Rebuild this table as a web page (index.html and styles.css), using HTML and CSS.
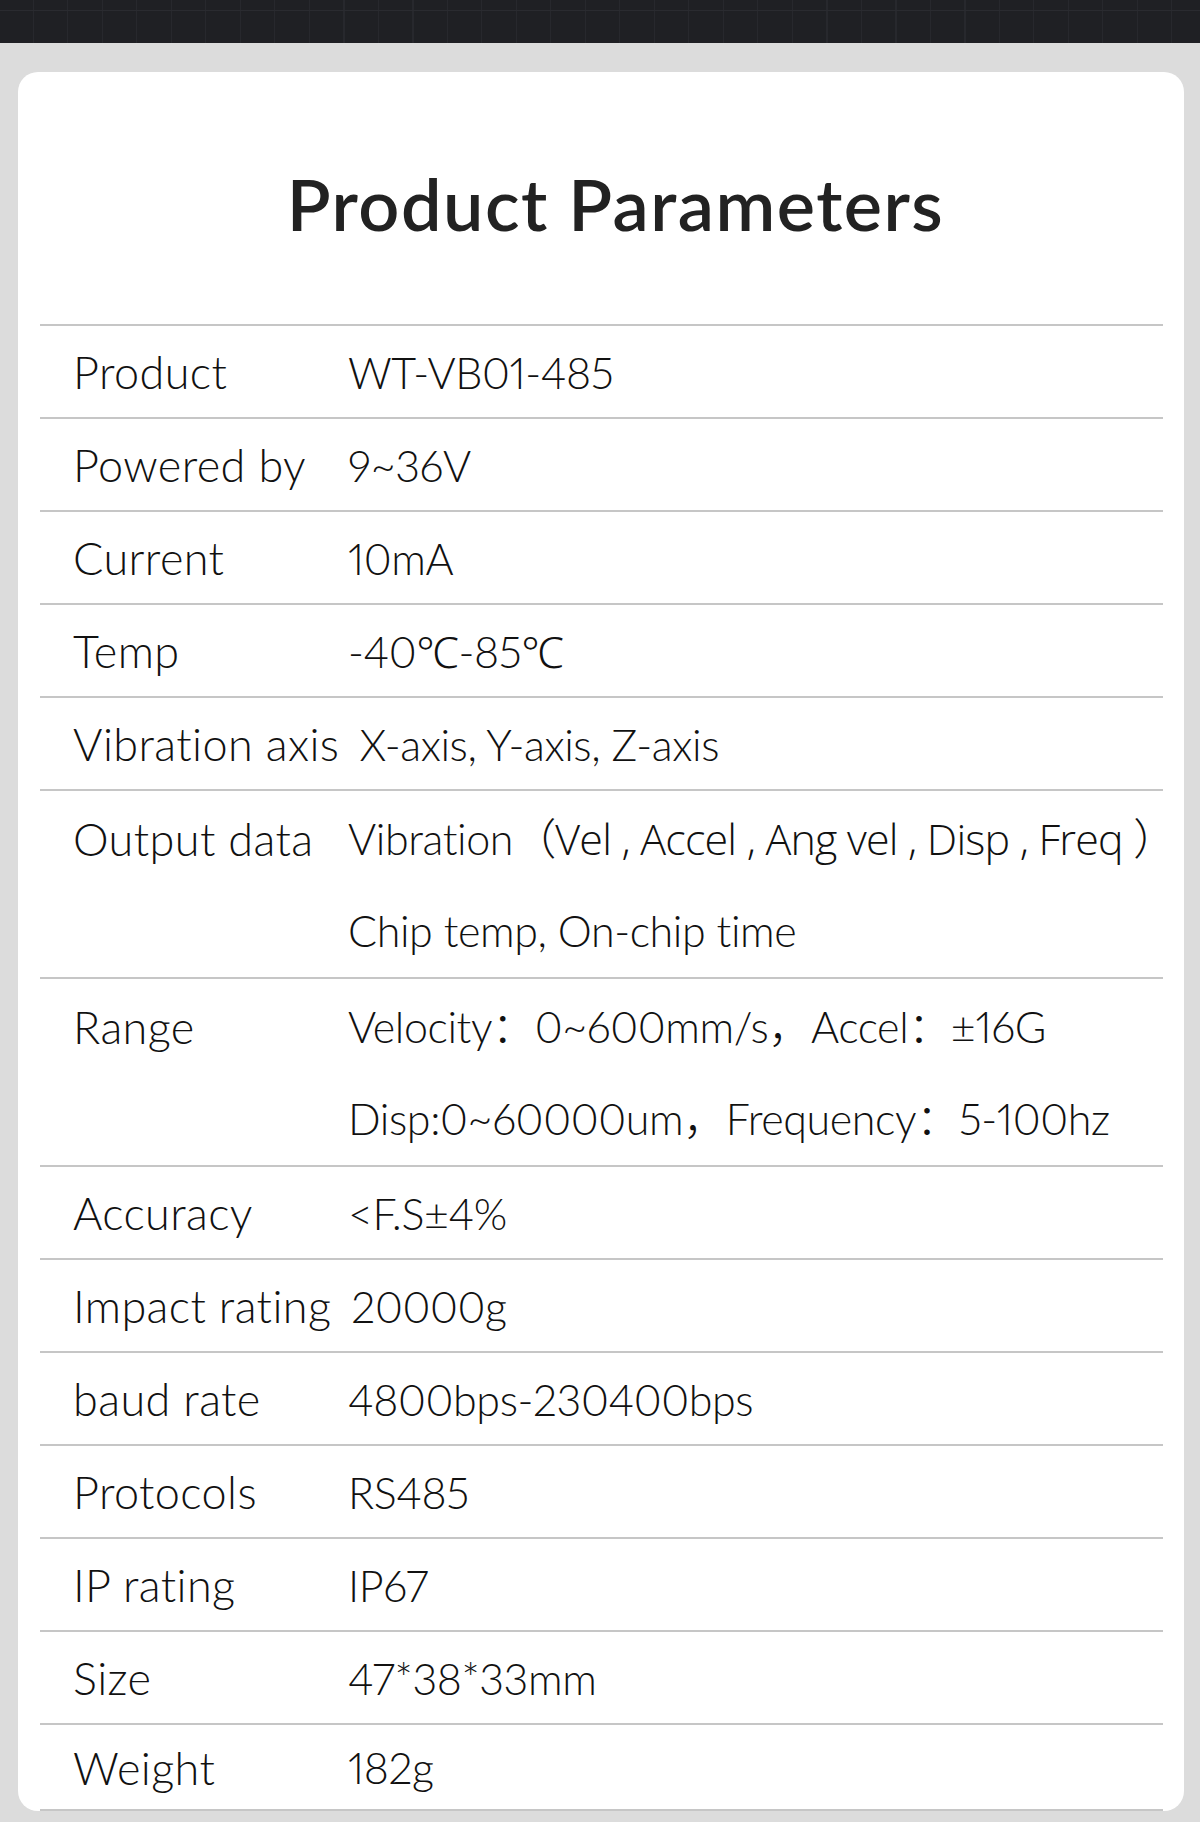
FILE: index.html
```html
<!DOCTYPE html>
<html lang="en">
<head>
    <meta charset="UTF-8">
    <meta name="viewport" content="width=device-width, initial-scale=1.0">
    <title>Product Parameters</title>
    <link rel="stylesheet" href="styles.css">
</head>
<body>
    <div class="topbar"></div>

    <div class="page">
        <div class="card">
            <h1 class="title">Product Parameters</h1>

            <div class="params">
                <div class="row">
                    <div class="label">Product</div>
                    <div class="value">WT-VB01-485</div>
                </div>
                <div class="row">
                    <div class="label">Powered by</div>
                    <div class="value">9~36V</div>
                </div>
                <div class="row">
                    <div class="label">Current</div>
                    <div class="value">10mA</div>
                </div>
                <div class="row">
                    <div class="label">Temp</div>
                    <div class="value">-40℃-85℃</div>
                </div>
                <div class="row">
                    <div class="label">Vibration axis</div>
                    <div class="value">X-axis, Y-axis, Z-axis</div>
                </div>
                <div class="row tall">
                    <div class="label">Output data</div>
                    <div class="value">Vibration<span class="narrow">（Vel , Accel , Ang vel , Disp , Freq ）</span><br>Chip temp, On-chip time</div>
                </div>
                <div class="row tall">
                    <div class="label">Range</div>
                    <div class="value">Velocity：0~600mm/s，Accel：±16G<br>Disp:0~60000um，Frequency：5-100hz</div>
                </div>
                <div class="row">
                    <div class="label">Accuracy</div>
                    <div class="value">&lt;F.S±4%</div>
                </div>
                <div class="row">
                    <div class="label">Impact rating</div>
                    <div class="value">20000g</div>
                </div>
                <div class="row">
                    <div class="label">baud rate</div>
                    <div class="value">4800bps-230400bps</div>
                </div>
                <div class="row">
                    <div class="label">Protocols</div>
                    <div class="value">RS485</div>
                </div>
                <div class="row">
                    <div class="label">IP rating</div>
                    <div class="value">IP67</div>
                </div>
                <div class="row">
                    <div class="label">Size</div>
                    <div class="value">47*38*33mm</div>
                </div>
                <div class="row">
                    <div class="label">Weight</div>
                    <div class="value">182g</div>
                </div>
            </div>
        </div>
    </div>
</body>
</html>
```

FILE: styles.css
```css
* {
    margin: 0;
    padding: 0;
    box-sizing: border-box;
}

html, body {
    height: 1822px;
    overflow: hidden;
}

body {
    font-family: Lato, "Noto Sans", "Noto Sans CJK SC", sans-serif;
    background: #dcdcdc;
    color: #111;
    font-variant-ligatures: none;
}

/* dark strip with faint grid at the very top */
.topbar {
    height: 43px;
    background-color: #1f2024;
    background-image:
        linear-gradient(to bottom, transparent 10px, #2a2b30 10px, #2a2b30 11px, transparent 11px),
        repeating-linear-gradient(to right, transparent 0, transparent 33px, #27282d 33px, #27282d 34px, transparent 34px, transparent 34.5px);
}

.page {
    padding: 29px 16px 0 18px;
}

.card {
    background: white;
    border-radius: 20px;
    padding: 88px 21px 0 22px;
}

.title {
    font-size: 72px;
    font-weight: 600;
    line-height: 86px;
    letter-spacing: 1.5px;
    text-align: center;
    color: #222;
    padding-left: 28px;
    margin-bottom: 78px;
}

.params {
    border-top: 2px solid #c6c6c6;
}

.row {
    display: flex;
    border-bottom: 2px solid #c6c6c6;
    font-size: 43px;
    font-weight: 300;
    padding-top: 2px;
    line-height: 89px;
}

.row.tall {
    line-height: 92px;
}

.row:last-child {
    line-height: 82px;
}

.label {
    flex: 0 0 auto;
    min-width: 308px;
    padding-left: 33px;
    padding-right: 20px;
    font-size: 45px;
    letter-spacing: 0.4px;
    white-space: nowrap;
}

.value {
    flex: 1;
    min-width: 0;
    white-space: nowrap;
    font-variant-numeric: proportional-nums;
    letter-spacing: -0.4px;
}

.narrow {
    font-family: "Open Sans", "Noto Sans CJK SC", sans-serif;
    letter-spacing: -0.8px;
}
```
